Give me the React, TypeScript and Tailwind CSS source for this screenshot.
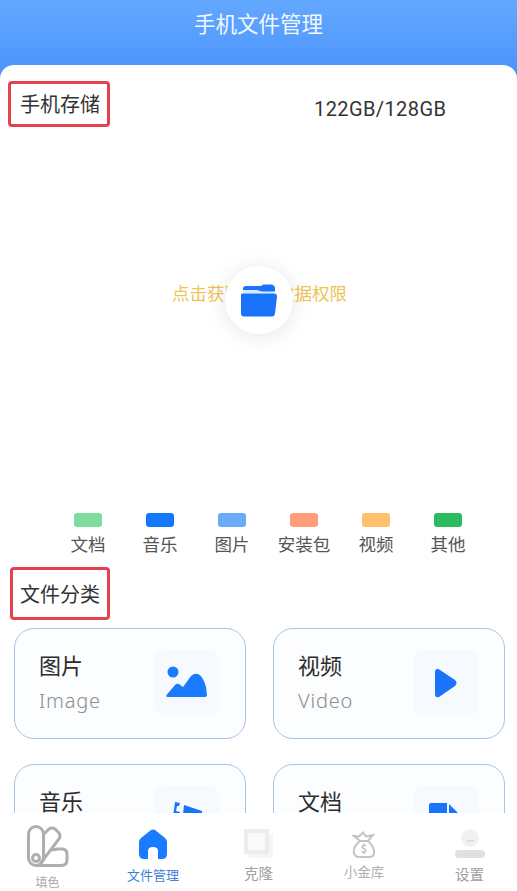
const cjk = "font-['Noto_Sans_CJK_SC','Noto_Sans',sans-serif]";

const legend = [
  { label: "文档", color: "bg-[#7fdc9f]" },
  { label: "音乐", color: "bg-[#1279fb]" },
  { label: "图片", color: "bg-[#6aabfa]" },
  { label: "安装包", color: "bg-[#ff9e78]" },
  { label: "视频", color: "bg-[#ffc06e]" },
  { label: "其他", color: "bg-[#2dbb5f]" },
];

function FolderIcon() {
  return (
    <svg width="38" height="34" viewBox="0 0 38 34">
      <path d="M3 9V6q0-3 3-3h14q2 0 3-1.500h8q3 0 4 3v4z" fill="#1a73fb" />
      <path d="M3 7h14l6 2h11v1.500H3z" fill="#dbe9ff" />
      <path d="M2 10.500h32q3 0 3 3l-2 17q-.5 3-3 3H4q-3 0-3-3V12q0-1.500 1-1.500z" fill="#1a73fb" />
    </svg>
  );
}

function ImageIcon() {
  return (
    <svg width="42" height="34" viewBox="0 0 42 34">
      <circle cx="7" cy="6" r="5.500" fill="#1a7bff" />
      <path d="M1 31q-1-.5-.5-2L9 19q2-2 4-1l4 3 8-11q3-3 7-2 5 2 8 13l1 8q0 2-2 2z" fill="#1a7bff" />
    </svg>
  );
}

function PlayIcon() {
  return (
    <svg width="24" height="30" viewBox="0 0 24 30">
      <path d="M1 4q0-3.500 3.500-3L21 12q3 3 0 6L5 29q-4 1-4-3z" fill="#1a73fb" />
    </svg>
  );
}

function MusicIcon() {
  return (
    <svg width="36" height="36" viewBox="0 0 36 36">
      <path d="M6 1l5 1-1 3-2 0-1 5 4 1-1 4 2 6H5l2-6-3-1 1-5z" fill="#1a73fb" />
      <path d="M15 4l18 6v12H13z" fill="#1a73fb" />
    </svg>
  );
}

function DocIcon() {
  return (
    <svg width="34" height="36" viewBox="0 0 34 36">
      <path d="M2 2h16v26H2q-2 0-2-2V4q0-2 2-2z" fill="#1a73fb" />
      <path d="M20 3l12 12H20z" fill="#1a73fb" />
    </svg>
  );
}

function PaletteIcon() {
  return (
    <svg width="42" height="42" viewBox="0 0 42 42" fill="none" stroke="#aeaeae" strokeWidth="3">
      <rect x="1.500" y="1.500" width="15" height="39" rx="7.500" />
      <circle cx="9" cy="33" r="3.500" />
      <path d="M16 10l6-6q3-2 6 0l4 4q2 3 0 6L13 39" />
      <path d="M24 25l7-1h5q4 1 4 5v6q0 5-5 5.500H9" />
    </svg>
  );
}

function HomeIcon() {
  return (
    <svg width="28" height="30" viewBox="0 0 28 30">
      <path
        d="M12 1q2-1 4 0l10 8q2 2 2 4v12q0 5-5 5h-4v-8q0-4-5-4t-5 4v8H5q-5 0-5-5V13q0-2 2-4z"
        fill="#1a7bff"
      />
    </svg>
  );
}

function CloneIcon() {
  return (
    <svg width="30" height="30" viewBox="0 0 30 30">
      <rect x="0" y="0" width="25" height="25" fill="#ececec" />
      <rect x="4" y="4" width="17" height="17" fill="#fafafa" />
      <rect x="25" y="5" width="4" height="24" fill="#f5f5f5" />
      <rect x="5" y="25" width="20" height="4" fill="#f5f5f5" />
    </svg>
  );
}

function MoneyBagIcon() {
  return (
    <svg width="24" height="28" viewBox="0 0 24 28" fill="none" stroke="#c4c4c4" strokeWidth="2">
      <path d="M8 10L2 5l5 .5 4-4 3 4 7-1.500-5 6" />
      <path d="M8 10C3 14 1 18 2 22q1 4 5 4h10q5 0 5-4c1-4-2-8-6-12z" />
      <text x="12" y="22" fontSize="11" fontWeight="700" fill="#bdbdbd" stroke="none" textAnchor="middle">
        $
      </text>
    </svg>
  );
}

function ProfileIcon() {
  return (
    <svg width="30" height="30" viewBox="0 0 30 30">
      <circle cx="15" cy="9" r="9" fill="#f1f1f1" />
      <path d="M11 12h8" stroke="#d8d8d8" strokeWidth="1.500" />
      <rect x="0" y="21" width="30" height="8" rx="4" fill="#e0e0e0" />
    </svg>
  );
}

function SectionLabel({ title, className }: { title: string; className: string }) {
  return (
    <div
      className={`flex items-center rounded-[4px] border-[3px] border-[#e4434d] text-[20px] leading-none text-[#333] ${className}`}
    >
      {title}
    </div>
  );
}

function CategoryCard({
  title,
  sub,
  children,
}: {
  title: string;
  sub?: string;
  children: React.ReactNode;
}) {
  return (
    <div className="flex h-[111px] justify-between rounded-[20px] border border-[#a9c5e0] bg-[#fbfdff] pl-[24px] pr-[25px]">
      <div>
        <div className="mt-[19px] text-[22px] leading-[32px] text-[#2c2c2c]">{title}</div>
        {sub ? (
          <div className="mt-[6px] font-['Noto_Sans',sans-serif] text-[20px] font-light leading-[30px] tracking-[0.800px] text-[#8d8d8d]">
            {sub}
          </div>
        ) : null}
      </div>
      <div className="mt-[21px] flex size-[66px] items-center justify-center rounded-[12px] bg-[#f6faff]">
        {children}
      </div>
    </div>
  );
}

function NavItem({
  label,
  children,
  iconClass,
  labelClass,
}: {
  label: string;
  children: React.ReactNode;
  iconClass: string;
  labelClass: string;
}) {
  return (
    <div className="flex w-[105.500px] shrink-0 flex-col items-center">
      <div className={`flex items-end justify-center ${iconClass}`}>{children}</div>
      <div className={labelClass}>{label}</div>
    </div>
  );
}

export default function App() {
  return (
    <div className={`flex h-[891px] w-[517px] flex-col overflow-hidden bg-white ${cjk}`}>
      <div className="flex h-[79px] shrink-0 justify-center bg-gradient-to-b from-[#63a8ff] to-[#4a92fb] pt-[7px] text-[21.500px] leading-[32px] text-[#f2f7ff]">
        手机文件管理
      </div>

      <main className="-mt-[14px] min-h-0 flex-1 overflow-hidden rounded-t-[14px] bg-white">
        <div className="flex items-start pl-[8px] pt-[16px]">
          <SectionLabel title="手机存储" className="h-[46px] w-[102px] pl-[9px]" />
          <div className="ml-[204px] mt-[14px] font-['Roboto',sans-serif] text-[20px] leading-[28px] tracking-[0.400px] text-[#333]">
            122GB/128GB
          </div>
        </div>

        <div className="relative flex h-[386px] justify-center">
          <div className="mt-[154px] pl-[2px] text-[17.500px] leading-[24px] text-[#eec455]">
            点击获取手机数据权限
          </div>
          <div className="absolute left-[225px] top-[139px] flex size-[68px] items-center justify-center rounded-full bg-white shadow-[0_2px_22px_rgba(0,0,0,0.10)]">
            <FolderIcon />
          </div>
        </div>

        <div className="flex pl-[52px]">
          {legend.map((item) => (
            <div key={item.label} className="flex w-[72px] flex-col items-center">
              <div className={`h-[14px] w-[28px] rounded-[3px] ${item.color}`} />
              <div className="mt-[4px] text-[17.500px] leading-[26px] text-[#555]">{item.label}</div>
            </div>
          ))}
        </div>

        <div className="pl-[10px] pt-[10px]">
          <SectionLabel title="文件分类" className="h-[53px] w-[100px] pl-[7px]" />
        </div>

        <div className="mt-[8px] grid grid-cols-[232px_232px] gap-x-[27px] gap-y-[25px] pl-[14px]">
          <CategoryCard title="图片" sub="Image">
            <ImageIcon />
          </CategoryCard>
          <CategoryCard title="视频" sub="Video">
            <PlayIcon />
          </CategoryCard>
          <CategoryCard title="音乐">
            <MusicIcon />
          </CategoryCard>
          <CategoryCard title="文档">
            <DocIcon />
          </CategoryCard>
        </div>
      </main>

      <nav className="flex h-[78px] shrink-0 justify-center bg-white">
        <NavItem label="填色" iconClass="h-[54px]" labelClass="mt-[7px] text-[12px] leading-[16px] text-[#a9a9a9]">
          <PaletteIcon />
        </NavItem>
        <NavItem label="文件管理" iconClass="h-[46px]" labelClass="mt-[7px] text-[13px] leading-[18px] text-[#3c82d2]">
          <HomeIcon />
        </NavItem>
        <NavItem label="克隆" iconClass="h-[46px]" labelClass="mt-[4px] text-[14.500px] leading-[20px] text-[#a0a0a0]">
          <CloneIcon />
        </NavItem>
        <NavItem label="小金库" iconClass="h-[46px]" labelClass="mt-[3px] text-[13.500px] leading-[18px] text-[#b0b0b0]">
          <MoneyBagIcon />
        </NavItem>
        <NavItem label="设置" iconClass="h-[46px]" labelClass="mt-[5px] text-[14.500px] leading-[20px] text-[#a0a0a0]">
          <ProfileIcon />
        </NavItem>
      </nav>
    </div>
  );
}
